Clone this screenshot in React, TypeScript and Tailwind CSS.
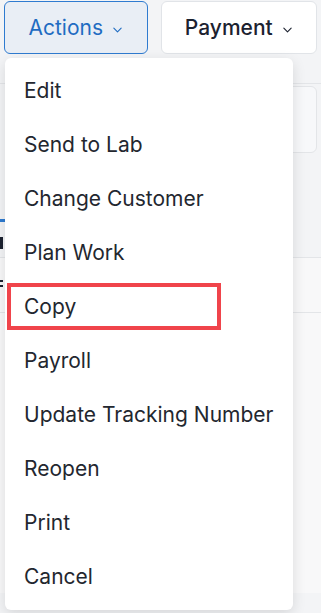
import React from "react";

const items = [
  "Edit",
  "Send to Lab",
  "Change Customer",
  "Plan Work",
  "Copy",
  "Payroll",
  "Update Tracking Number",
  "Reopen",
  "Print",
  "Cancel",
];

function Chevron({ className }: { className?: string }) {
  return (
    <svg viewBox="0 0 12 8" className={className} fill="none" stroke="currentColor" strokeWidth="1.2" strokeLinecap="round" strokeLinejoin="round">
      <path d="M2 2l4 4 4-4" />
    </svg>
  );
}

export default function App() {
  return (
    <div
      className="relative w-[321px] h-[613px] overflow-hidden bg-[#f3f4f6]"
      style={{ fontFamily: "Inter, 'Noto Sans', sans-serif" }}
    >
      {/* top bar */}
      <div className="flex gap-[13px] px-[4px] pt-[1px] h-[58px]">
        <button className="flex items-center justify-center gap-[9px] w-[144px] h-[53px] rounded-[6px] border border-[#2f7bd0] bg-[#e9eef5] text-[#1f6cc2] text-[21px]">
          <span>Actions</span>
          <Chevron className="w-[11px] h-[8px] mt-[4px]" />
        </button>
        <button className="flex items-center justify-center gap-[9px] w-[157px] h-[53px] rounded-[6px] border border-[#e1e4e8] bg-white text-[#1c2230] text-[21px] font-medium">
          <span>Payment</span>
          <Chevron className="w-[11px] h-[8px] mt-[4px]" />
        </button>
      </div>

      {/* background page content */}
      <div className="flex flex-col">
        <div className="h-[26px] border-b border-[#e3e5e8]" />
        <div className="flex h-[70px] justify-end pr-[4px] pt-[2px]">
          <div className="w-[40px] h-[67px] rounded-[6px] border border-[#e3e5e8] bg-[#f7f8fa]" />
        </div>
        <div className="h-[65px]" />
        <div className="h-[3px] w-[5px] bg-[#2f7bd0]" />
        <div className="h-[36px] border-b border-[#e3e5e8] flex items-center">
          <div className="w-[3px] h-[12px] mt-[6px] bg-[#1c2230]" />
        </div>
        <div className="h-[55px] border-b border-[#e3e5e8] bg-[#f8f8f9] flex items-center">
          <div className="flex flex-col gap-[3px] -mt-[4px]">
            <div className="w-[3px] h-[2px] bg-[#1c2230]" />
            <div className="w-[3px] h-[2px] bg-[#1c2230]" />
          </div>
        </div>
        <div className="h-[280px] bg-[#f8f8f9]" />
      </div>

      {/* dropdown menu */}
      <div className="absolute left-[5px] top-[58px] w-[288px] rounded-[6px] bg-white py-[6px] shadow-[0_4px_14px_rgba(0,0,0,0.12)]">
        {items.map((label) => (
          <div key={label} className="relative flex h-[54px] items-center pl-[19px] text-[21px] text-[#23272f]">
            {label === "Copy" && (
              <div className="absolute left-[2px] top-[3px] h-[47px] w-[214px] border-[4px] border-[#f0444b]" />
            )}
            <span className="relative">{label}</span>
          </div>
        ))}
      </div>
    </div>
  );
}
